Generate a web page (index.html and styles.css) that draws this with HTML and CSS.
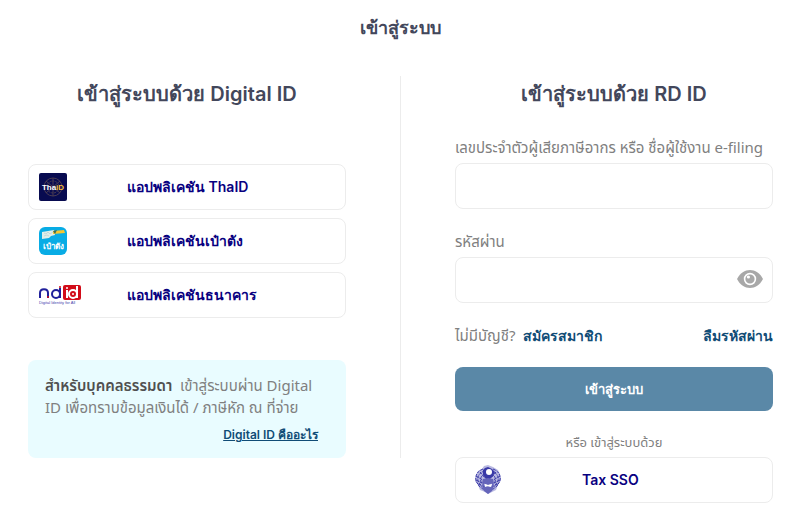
FILE: index.html
```html
<!DOCTYPE html>
<html lang="th">
<head>
<meta charset="utf-8">
<meta name="viewport" content="width=device-width, initial-scale=1">
<title>เข้าสู่ระบบ</title>
<link rel="stylesheet" href="styles.css">
</head>
<body>
<main>
  <h1>เข้าสู่ระบบ</h1>
  <div class="columns">
    <section class="digital">
      <h2>เข้าสู่ระบบด้วย Digital ID</h2>
      <div class="providers">
        <button class="provider" type="button">
          <svg class="logo" width="28" height="28" viewBox="0 0 28 28" aria-hidden="true">
            <rect width="28" height="28" rx="2" fill="#080b50"/>
            <g fill="none" stroke="#4a3c52"><circle cx="14" cy="14" r="9"/><circle cx="14" cy="14" r="6" stroke-dasharray="2 1"/><path d="M7 8l14 12M21 8L7 20M14 5v18"/></g>
            <text x="14" y="17" text-anchor="middle" class="mark" font-size="8" fill="#fff">Tha<tspan fill="#f5bd38">iD</tspan></text>
          </svg>
          <span>แอปพลิเคชัน ThaID</span>
        </button>
        <button class="provider" type="button">
          <svg class="logo" width="28" height="28" viewBox="0 0 28 28" aria-hidden="true">
            <rect width="28" height="28" rx="6" fill="#08ace5"/>
            <path d="M3 5l12-2 1 5-4 1-2 2-7 1z" fill="#e1eee9"/>
            <path d="M5 6l2 1 2-2 2 2 3-2M5 9l3-1 2 1" fill="none" stroke="#c3dadb"/>
            <path d="M14 4l11-1 1 3-12 1z" fill="#f7c72f"/><path d="M14 4l4-1-2 4z" fill="#386d59"/>
            <text x="14" y="22" text-anchor="middle" class="mark" font-size="8" fill="#fff">เป๋าตัง</text>
          </svg>
          <span>แอปพลิเคชันเป๋าตัง</span>
        </button>
        <button class="provider" type="button">
          <svg class="logo" width="43" height="22" viewBox="0 0 43 22" aria-hidden="true">
            <rect x="24" y="1" width="18" height="15" rx="2" fill="#d20c19"/>
            <g fill="none" stroke="#20209b" stroke-width="2"><path d="M1 14V9c0-5 8-5 8 0v5"/><circle cx="17" cy="10" r="4"/><path d="M21 4v10"/></g>
            <circle cx="9" cy="13" r="1" fill="#d20c19"/><circle cx="21" cy="3" r="1" fill="#d20c19"/>
            <g fill="none" stroke="#fff" stroke-width="2"><path d="M28 6v8M38 2v12"/><circle cx="34" cy="10" r="4"/></g>
            <circle cx="28" cy="4" r="1" fill="#fff"/><circle cx="34" cy="10" r="1" fill="#fff"/>
            <text x="0" y="20" class="tagline" font-size="4" fill="#4545ae">Digital Identity for All</text>
          </svg>
          <span>แอปพลิเคชันธนาคาร</span>
        </button>
      </div>
      <aside class="notice">
        <p><strong>สำหรับบุคคลธรรมดา</strong>&nbsp; เข้าสู่ระบบผ่าน Digital ID เพื่อทราบข้อมูลเงินได้ / ภาษีหัก ณ ที่จ่าย</p>
        <a href="#digital-id">Digital ID คืออะไร</a>
      </aside>
    </section>
    <section class="rd">
      <h2>เข้าสู่ระบบด้วย RD ID</h2>
      <form>
        <label for="user">เลขประจำตัวผู้เสียภาษีอากร หรือ ชื่อผู้ใช้งาน e-filing</label>
        <input id="user" type="text">
        <label for="password">รหัสผ่าน</label>
        <div class="password">
          <input id="password" type="password">
          <button class="eye" type="button" aria-label="แสดงรหัสผ่าน">
            <svg width="26" height="18" viewBox="0 0 26 18" aria-hidden="true"><path d="M0 9C6-3 20-3 26 9 20 21 6 21 0 9z" fill="#a8a8a8"/><circle cx="13" cy="9" r="5.4" fill="#a8a8a8" stroke="#fff" stroke-width="1.6"/><circle cx="11.4" cy="7" r="1.6" fill="#fff"/></svg>
          </button>
        </div>
        <div class="links"><span>ไม่มีบัญชี? <a href="#register">สมัครสมาชิก</a></span><a href="#forgot">ลืมรหัสผ่าน</a></div>
        <button class="submit" type="submit">เข้าสู่ระบบ</button>
      </form>
      <p class="or">หรือ เข้าสู่ระบบด้วย</p>
      <button class="provider sso" type="button">
        <svg class="logo" width="26" height="28" viewBox="0 0 26 28" aria-hidden="true">
          <path d="M7 3L3 5 1 9l-1 6 3 4 2 5 5 2 3 2 4-2 4-2 2-5 3-5-1-6-2-4-5-3-5-2-4 1z" fill="#b9b9e1"/>
          <g fill="none" stroke="#3b3ba8" stroke-width="1" stroke-dasharray="3 1">
            <path d="M8 3C2 5 0 10 1 15l3 5 5 4M10 5c-5 1-8 5-7 10l4 6M10 8c-4 1-5 5-4 8l4 5M18 3c6 2 8 7 7 12l-3 5-5 4M16 5c5 1 8 5 7 10l-4 6M16 8c4 1 5 5 4 8l-4 5"/>
            <path d="M1 10l8 5M1 14l8 4M3 18l7 3M25 10l-8 5M25 14l-8 4M23 18l-7 3M5 6l5 6M21 6l-5 6"/>
          </g>
          <path d="M8 4l2-2 3-1 4 2 3 3-2 4-3 3h-4L8 9z" fill="#3939a7"/><circle cx="14" cy="6" r="3" fill="#fff"/>
          <path d="M8 13l5-1 5 1 1 4-6 2-6-2zM7 21l4-1 4 1 4-1-2 5-4 3-4-3z" fill="#6565ba"/>
          <path d="M10 18l3 1 4-1-1 3-3-1-3 1z" fill="#fff"/>
        </svg>
        <span>Tax SSO</span>
      </button>
    </section>
  </div>
</main>
</body>
</html>
```
FILE: styles.css
```css
* { box-sizing: border-box; }
body {
  margin: 0;
  background: #fff;
  color: #808080;
  font: 14px/22px "Noto Sans", "Noto Sans Thai", sans-serif;
}
h1, h2, p { margin: 0; }
h1, h2 {
  color: #43475b;
  font-family: Inter, "Liberation Sans", sans-serif;
  font-weight: 600;
  text-align: center;
}
h1 { padding: 12px 0 32px; font-size: 18px; line-height: 32px; }
h2 { font-size: 20px; line-height: 36px; white-space: nowrap; }
.columns { display: grid; grid-template-columns: 401fr 399fr; align-items: start; }
.digital { padding: 0 54px 0 28px; border-right: 1px solid #ececec; }
.rd { padding: 0 27px 20px 54px; }
.providers { display: grid; gap: 8px; margin: 52px 0 42px; }
button, input { font: inherit; }
a {
  color: #104c76;
  font-family: Inter, "Liberation Sans", sans-serif;
  font-weight: 600;
  font-size: 14px;
  text-decoration: none;
}
.provider {
  display: grid;
  grid-template-columns: 88px 1fr;
  align-items: center;
  width: 100%;
  height: 46px;
  padding: 0 10px;
  border: 1px solid #ececec;
  border-radius: 8px;
  background: #fff;
  color: #080080;
  font-family: Inter, "Liberation Sans", sans-serif;
  font-weight: 600;
  font-size: 14px;
  text-align: left;
}
.logo { overflow: visible; }
.mark { font-family: "Liberation Sans", sans-serif; font-weight: 700; }
.tagline { font-family: "Liberation Sans", sans-serif; font-weight: 400; }
.notice {
  display: grid;
  padding: 14px 28px 12px 17px;
  border-radius: 8px;
  background: #e9fcff;
}
.notice strong { color: #505050; font-weight: 600; }
.notice a { justify-self: end; margin-top: 6px; font-size: 12px; text-decoration: underline; }
.notice p { font-size: 15px; }
label { display: block; margin-top: 20px; line-height: 24px; font-size: 15px; white-space: nowrap; }
h2 + form { padding-top: 3px; }
input {
  display: block;
  width: 100%;
  height: 46px;
  margin-top: 4px;
  padding: 0 16px;
  border: 1px solid #ececec;
  border-radius: 8px;
  background: #fff;
}
.password { position: relative; }
.eye {
  position: absolute;
  right: 10px;
  top: 13px;
  display: flex;
  padding: 0;
  border: 0;
  background: none;
}
.links { display: flex; justify-content: space-between; align-items: baseline; margin: 21px 0 20px; font-size: 15px; }
.links a { margin-left: 4px; }
.submit {
  width: 100%;
  height: 44px;
  border: 0;
  border-radius: 8px;
  background: #5a88a7;
  color: #fff;
  font-family: Inter, "Liberation Sans", sans-serif;
  font-weight: 600;
  font-size: 13px;
}
.or { margin: 20px 0 4px; text-align: center; font-size: 13px; }
.sso { grid-template-columns: 107px 1fr; padding-left: 19px; }
```
